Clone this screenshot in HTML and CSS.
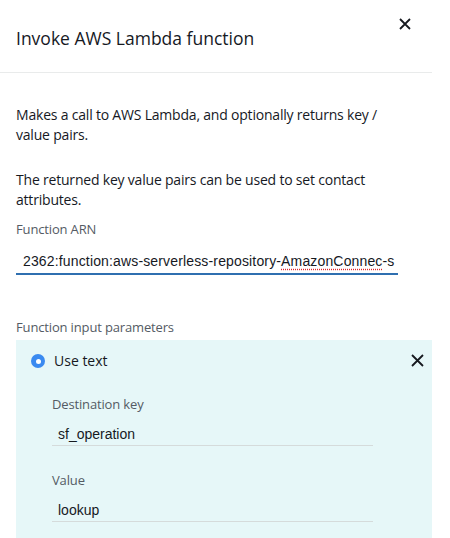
FILE: index.html
```html
<!DOCTYPE html>
<html>
<head>
<meta charset="utf-8">
<link rel="stylesheet" href="styles.css">
</head>
<body>
<div class="panel">
  <div class="header">
    <h1 class="title">Invoke AWS Lambda function</h1>
    <button class="close" aria-label="Close">
      <svg width="12" height="12" viewBox="0 0 12 12"><path d="M1 1L11 11M11 1L1 11" stroke="#16191f" stroke-width="1.8" fill="none"/></svg>
    </button>
  </div>
  <div class="content">
    <p class="desc">Makes a call to AWS Lambda, and optionally returns key / value pairs.</p>
    <p class="desc second">The returned key value pairs can be used to set contact attributes.</p>
    <div class="label">Function ARN</div>
    <div class="input arn">2362:function:aws-serverless-repository-<span class="spell">AmazonConnec</span>-s</div>
    <div class="label params-label">Function input parameters</div>
    <div class="param-box">
      <div class="param-head">
        <span class="radio"><span class="dot"></span></span>
        <span class="use-text">Use text</span>
        <button class="close box-close" aria-label="Remove">
          <svg width="13" height="13" viewBox="0 0 13 13"><path d="M1 1L12 12M12 1L1 12" stroke="#16191f" stroke-width="1.8" fill="none"/></svg>
        </button>
      </div>
      <div class="field">
        <div class="label sub">Destination key</div>
        <div class="input small">sf_operation</div>
      </div>
      <div class="field">
        <div class="label sub">Value</div>
        <div class="input small">lookup</div>
      </div>
    </div>
  </div>
</div>
</body>
</html>
```
FILE: styles.css
```css
html, body {
  margin: 0;
  padding: 0;
  background: #ffffff;
}
body {
  font-family: "Open Sans", "Noto Sans", sans-serif;
  color: #16191f;
  overflow: hidden;
}
.panel {
  width: 432px;
}
.header {
  height: 73px;
  box-sizing: border-box;
  border-bottom: 1px solid #e9ebeb;
  padding: 0 21px 0 16px;
  display: flex;
  justify-content: space-between;
  align-items: flex-start;
}
.title {
  margin: 26px 0 0 0;
  font-size: 17.5px;
  line-height: 24px;
  font-weight: 400;
}
.close {
  border: 0;
  background: none;
  padding: 0;
  margin: 18px 0 0 0;
  width: 12px;
  height: 12px;
  display: flex;
  cursor: pointer;
}
.content {
  padding: 32px 16px 0 16px;
}
.desc {
  margin: 0;
  max-width: 380px;
  font-size: 14px;
  line-height: 20px;
  letter-spacing: -0.2px;
}
.desc.second {
  margin-top: 25px;
}
.label {
  font-size: 13px;
  line-height: 18px;
  color: #545b64;
  margin-top: 10px;
  letter-spacing: -0.15px;
}
.input {
  font-family: "Liberation Sans", Arial, sans-serif;
  font-size: 14px;
  line-height: 18px;
  color: #16191f;
  white-space: nowrap;
  overflow: hidden;
}
.arn {
  width: 382px;
  box-sizing: border-box;
  margin-top: 14px;
  padding: 0 0 3px 7px;
  border-bottom: 2px solid #2f6fb0;
  letter-spacing: 0.15px;
}
.spell {
  text-decoration: underline dotted #e0262a;
  text-underline-offset: 3px;
}
.params-label {
  margin-top: 43px;
}
.param-box {
  background: #e6f7f8;
  margin: 4px -16px 0 0;
  padding: 12px 0 20px 15px;
  height: 210px;
  box-sizing: border-box;
}
.param-head {
  display: flex;
  align-items: center;
  height: 16px;
  margin-top: 1px;
}
.radio {
  width: 14px;
  height: 14px;
  border-radius: 50%;
  background: #3a8af0;
  display: flex;
  align-items: center;
  justify-content: center;
  margin-right: 9px;
}
.dot {
  width: 5px;
  height: 5px;
  border-radius: 50%;
  background: #ffffff;
}
.use-text {
  font-size: 14px;
  line-height: 20px;
  flex: 1;
}
.box-close {
  width: 13px;
  height: 13px;
  margin: -2px 8px 0 0;
}
.field {
  padding-left: 21px;
}
.label.sub {
  margin-top: 26px;
}
.input.small {
  width: 321px;
  box-sizing: border-box;
  margin-top: 12px;
  padding: 0 0 2px 6px;
  border-bottom: 1px solid #d5dbdb;
}
.field + .field .label.sub {
  margin-top: 25px;
}
```
